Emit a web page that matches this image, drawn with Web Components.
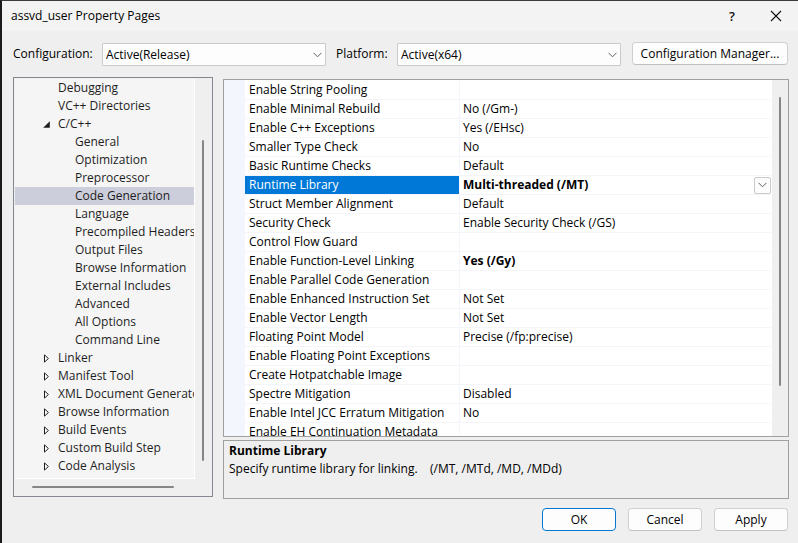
<!DOCTYPE html>
<html lang="en">
<head>
<meta charset="utf-8">
<title>assvd_user Property Pages</title>
<style>
  html, body { margin: 0; height: 100%; }
  body { font: 12px/18px "Open Sans", "Noto Sans", sans-serif; color: #000; background: #efefef; }
</style>
</head>
<body>
<property-dialog></property-dialog>

<script>
const define = (name, html, setup) => {
  const template = document.createElement('template');
  template.innerHTML = html;
  customElements.define(name, class extends HTMLElement {
    constructor() {
      super();
      this.attachShadow({ mode: 'open' }).append(template.content.cloneNode(true));
    }
    connectedCallback() { if (setup) setup(this, this.shadowRoot); }
  });
};

define('title-bar', `
  <style>
    :host { display: flex; align-items: center; height: 30px; padding-left: 9px; background: #f3f3f3; }
    h1 { flex: 1; margin: 0; font: inherit; }
    button { width: 44px; height: 30px; padding: 0; border: 0; background: none; font: 600 13px "Open Sans", sans-serif; color: #111;
      display: flex; align-items: center; justify-content: center; }
  </style>
  <h1><slot></slot></h1>
  <button type="button" aria-label="Help">?</button>
  <button type="button" aria-label="Close"><svg width="12" height="12" viewBox="0 0 12 12" fill="none" stroke="#111" stroke-width="1.1"><path d="M1 1l10 10M11 1L1 11"/></svg></button>
`);

define('labelled-select', `
  <style>
    :host { display: flex; flex: 1; align-items: center; height: 24px; }
    label { width: var(--label-width); }
    .field { flex: 1; display: grid; align-self: flex-end; align-items: center; height: 23px; }
    select, svg { grid-area: 1 / 1; }
    select { appearance: none; box-sizing: border-box; width: 100%; height: 23px; margin: 0; padding: 0 24px 0 3px;
      border: 1px solid #cacaca; border-radius: 1px; background: #fdfdfd; font: inherit; color: #000; }
    svg { justify-self: end; margin-right: 4px; pointer-events: none; }
  </style>
  <label for="s"><slot></slot></label>
  <div class="field"><select id="s"><option></option></select>
  <svg width="9" height="6" viewBox="0 0 9 6" fill="none" stroke="#606060"><path d="M.5.8l4 4 4-4"/></svg></div>
`, (el, root) => { root.querySelector('option').textContent = el.getAttribute('value'); });

define('push-button', `
  <style>
    :host { display: block; width: 74px; }
    :host([wide]) { width: 156px; }
    button { box-sizing: border-box; width: 100%; height: 23px; padding: 0; border: 1px solid #d0d0d0; border-bottom-color: #c0c0c0;
      border-radius: 4px; background: #fdfdfd; font: inherit; line-height: 20px; color: #000; }
    :host([primary]) button { border-color: #0078d4; }
  </style>
  <button type="button"><slot></slot></button>
`);

define('scroll-thumb', `
  <style>
    :host { display: block; background: #868686; border-radius: 1px; }
  </style>
`);

define('tree-item', `
  <style>
    :host { display: flex; align-items: center; height: 18px; padding-left: 25px; white-space: nowrap; color: #1e1e1e; }
    :host([level="2"]) { padding-left: 42px; }
    :host([selected]) { background: #cccedb; }
    button, .space { width: 18px; height: 18px; padding: 0; border: 0; background: none; flex: none; }
    button { display: flex; align-items: center; padding-left: 3px; box-sizing: border-box; }
    svg { display: none; }
    :host([state="open"]) .open, :host([state="closed"]) .closed { display: block; }
  </style>
  <span class="space"></span><slot></slot>
`, (el, root) => {
  el.setAttribute('role', 'treeitem');
  const state = el.getAttribute('state');
  if (!state) return;
  const b = document.createElement('button');
  b.type = 'button';
  b.setAttribute('aria-label', state === 'open' ? 'Collapse' : 'Expand');
  b.innerHTML = state === 'open'
    ? '<svg class="open" width="7" height="7" viewBox="0 0 7 7"><path d="M6.8 .2v6.6H.2z" fill="#1e1e1e"/></svg>'
    : '<svg class="closed" width="7" height="9" viewBox="0 0 7 9"><path d="M1.5 .9v7.2L5.4 4.5z" fill="#fff" stroke="#1e1e1e"/></svg>';
  root.querySelector('.space').replaceWith(b);
});

define('tree-view', `
  <style>
    :host { display: grid; grid-template: minmax(0, 1fr) 17px / minmax(0, 1fr) 17px; box-sizing: border-box;
      border: 1px solid #828790; padding: 1px 0 0 1px; background: #efefef; }
    .items { overflow: hidden; background: #f5f5f5; border-right: 1px solid #fff; border-bottom: 1px solid #fff; }
    .v { width: 2px; margin: 61px 0 18px 7px; }
    .h { height: 2px; margin: 7px 21px 0 17px; }
  </style>
  <div class="items" role="tree"></div>
  <scroll-thumb class="v"></scroll-thumb>
  <scroll-thumb class="h"></scroll-thumb>
`, (el, root) => {
  const items = [
    ['Debugging'], ['VC++ Directories'], ['C/C++', 1, 'open'],
    ...['General', 'Optimization', 'Preprocessor', 'Code Generation', 'Language', 'Precompiled Headers', 'Output Files',
      'Browse Information', 'External Includes', 'Advanced', 'All Options', 'Command Line'].map(t => [t, 2]),
    ...['Linker', 'Manifest Tool', 'XML Document Generator', 'Browse Information', 'Build Events', 'Custom Build Step',
      'Code Analysis'].map(t => [t, 1, 'closed'])
  ];
  const box = root.querySelector('.items');
  for (const [text, level = 1, state] of items) {
    const item = document.createElement('tree-item');
    item.textContent = text;
    item.setAttribute('level', level);
    if (state) item.setAttribute('state', state);
    if (text === 'Code Generation') item.setAttribute('selected', '');
    box.append(item);
  }
});

define('property-grid', `
  <style>
    :host { display: grid; grid-template: minmax(0, 1fr) / minmax(0, 1fr) 16px; box-sizing: border-box; overflow: hidden;
      border: 1px solid #a0a0a0; background: #efefef; }
    .view { overflow: hidden; padding: 1px 1px 0 21px; background: linear-gradient(to right, #f3f7fd 21px, #fff 21px); }
    table { width: 100%; table-layout: fixed; border-collapse: separate; border-spacing: 0; }
    th, td { height: 18px; padding: 0 0 0 4px; border-bottom: 1px solid #f3f5fb; font-weight: 400; text-align: left;
      line-height: 18px; white-space: nowrap; overflow: hidden; }
    th { width: 210px; border-right: 1px solid #f3f5fb; }
    td { padding-left: 3px; }
    .set { font-weight: 700; }
    .current th { background: #0078d7; background-clip: padding-box; color: #fff; }
    .cell { display: flex; justify-content: space-between; align-items: center; height: 18px; }
    button { display: flex; align-items: center; justify-content: center; box-sizing: border-box; width: 17px; height: 17px;
      padding: 0; border: 1px solid #cacaca; border-radius: 2px; background: #fdfdfd; }
    scroll-thumb { width: 2px; margin: 17px 0 50px 7px; }
  </style>
  <div class="view"><table aria-label="Code Generation properties"><tbody></tbody></table></div>
  <scroll-thumb></scroll-thumb>
`, (el, root) => {
  const rows = [
    ['Enable String Pooling', ''], ['Enable Minimal Rebuild', 'No (/Gm-)'], ['Enable C++ Exceptions', 'Yes (/EHsc)'],
    ['Smaller Type Check', 'No'], ['Basic Runtime Checks', 'Default'], ['Runtime Library', 'Multi-threaded (/MT)', true],
    ['Struct Member Alignment', 'Default'], ['Security Check', 'Enable Security Check (/GS)'], ['Control Flow Guard', ''],
    ['Enable Function-Level Linking', 'Yes (/Gy)', true], ['Enable Parallel Code Generation', ''],
    ['Enable Enhanced Instruction Set', 'Not Set'], ['Enable Vector Length', 'Not Set'],
    ['Floating Point Model', 'Precise (/fp:precise)'], ['Enable Floating Point Exceptions', ''],
    ['Create Hotpatchable Image', ''], ['Spectre Mitigation', 'Disabled'], ['Enable Intel JCC Erratum Mitigation', 'No'],
    ['Enable EH Continuation Metadata', '']
  ];
  const chevron = '<button type="button" aria-label="Choose runtime library"><svg width="9" height="6" viewBox="0 0 9 6" fill="none" stroke="#606060"><path d="M.5.8l4 4 4-4"/></svg></button>';
  root.querySelector('tbody').innerHTML = rows.map(([name, value, set]) => {
    const current = name === 'Runtime Library';
    return `<tr${current ? ' class="current"' : ''}><th scope="row">${name}</th><td${set ? ' class="set"' : ''}>` +
      (current ? `<div class="cell"><span>${value}</span>${chevron}</div>` : value) + '</td></tr>';
  }).join('');
});

define('property-help', `
  <style>
    :host { display: block; box-sizing: border-box; height: 59px; padding: 1px 5px; border: 1px solid #a0a0a0; }
    h2, p { margin: 0; font-size: 12px; line-height: 18px; white-space: pre; }
  </style>
  <h2><slot name="heading"></slot></h2>
  <p><slot></slot></p>
`);

define('property-dialog', `
  <style>
    :host { display: flex; flex-direction: column; box-sizing: border-box; height: 100vh;
      border-top: 1px solid #3d393d; border-left: 2px solid #1b1a1d; background: #efefef; }
    .bar { display: flex; padding: 11px 10px 11px 11px; }
    .config { --label-width: 89px; flex-basis: 89px; margin-right: 10px; }
    .platform { --label-width: 61px; flex-basis: 61px; margin-right: 11px; }
    main { flex: 1; min-height: 0; display: grid; grid-template-columns: 200px minmax(0, 1fr); gap: 10px; padding: 0 9px 0 11px; }
    tree-view { margin-bottom: 2px; min-height: 0; }
    .pane { display: flex; flex-direction: column; gap: 3px; padding-top: 2px; min-height: 0; }
    property-grid { flex: 1; min-height: 0; }
    footer { display: flex; justify-content: flex-end; gap: 12px; padding: 9px 10px 12px; }
  </style>
  <title-bar>assvd_user Property Pages</title-bar>
  <div class="bar">
    <labelled-select class="config" value="Active(Release)">Configuration:</labelled-select>
    <labelled-select class="platform" value="Active(x64)">Platform:</labelled-select>
    <push-button wide>Configuration Manager...</push-button>
  </div>
  <main>
    <tree-view></tree-view>
    <div class="pane">
      <property-grid></property-grid>
      <property-help><span slot="heading">Runtime Library</span>Specify runtime library for linking.    (/MT, /MTd, /MD, /MDd)</property-help>
    </div>
  </main>
  <footer>
    <push-button primary>OK</push-button>
    <push-button>Cancel</push-button>
    <push-button>Apply</push-button>
  </footer>
`);
</script>
</body>
</html>
